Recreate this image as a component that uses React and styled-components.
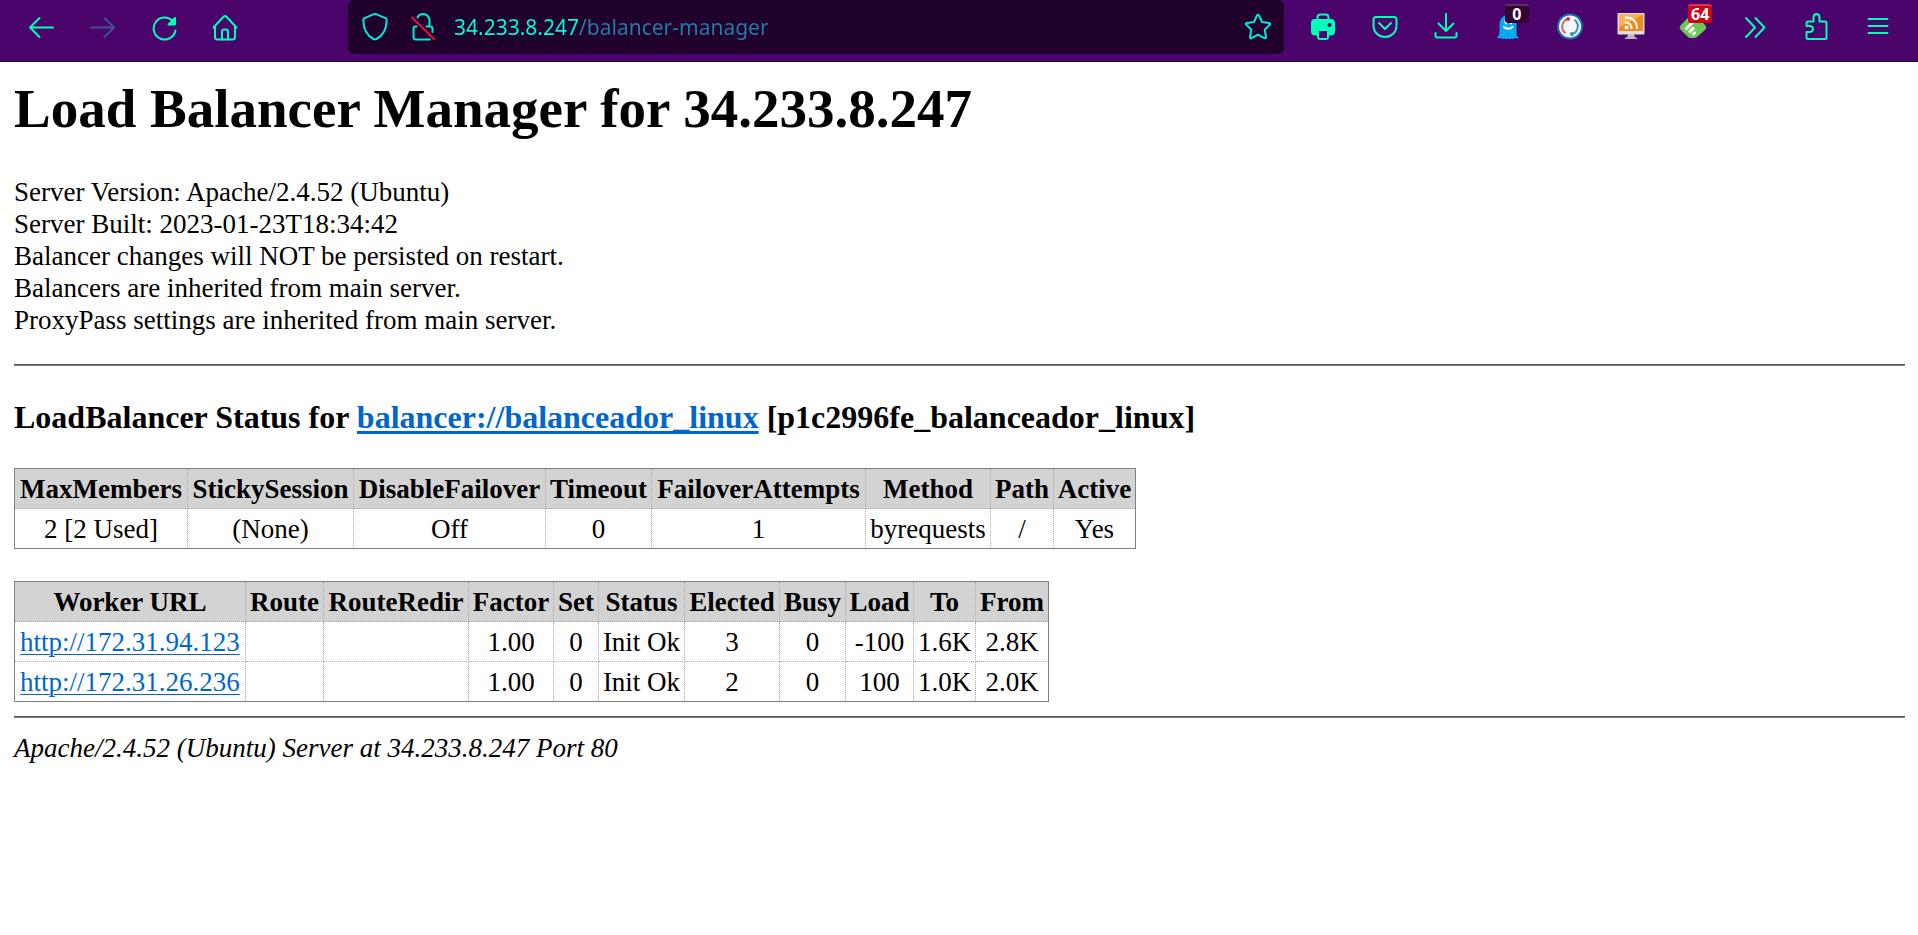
import React from 'react';
import styled, { createGlobalStyle } from 'styled-components';

const GlobalStyle = createGlobalStyle`
  *, *::before, *::after { box-sizing: border-box; }
  body { margin: 0; background: #fff; color: #000; font-family: "Liberation Serif", "Times New Roman", serif; font-size: 27px; line-height: 32px; }
`;

/* ---------- browser toolbar ---------- */

const Toolbar = styled.header`
  display: flex;
  align-items: flex-start;
  height: 62px;
  padding: 0 9px 0 10px;
  background: #4b046b;
  border-bottom: 1px solid #22062f;
`;

const ButtonGroup = styled.div`
  display: grid;
  grid-template-columns: repeat(${(p) => p.$count}, 1fr);
  flex: 0 0 ${(p) => p.$width};
  height: 54px;
`;

const ToolButton = styled.button`
  position: relative;
  display: flex;
  align-items: center;
  justify-content: center;
  padding: 0;
  border: 0;
  background: none;
  color: #00ffb7;
  cursor: pointer;

  &:disabled { color: #40558b; cursor: default; }
`;

const AddressBar = styled.form`
  display: flex;
  align-items: center;
  flex: 1 1 auto;
  height: 54px;
  margin: 0 8px 0 92px;
  padding: 0 10px 0 11px;
  border-radius: 6px;
  background: #20012c;
`;

const AddressButton = styled(ToolButton)`
  flex: 0 0 32px;
  height: 54px;
  margin-right: ${(p) => p.$after || '0'};
  color: #00ead9;
`;

const AddressInput = styled.input`
  flex: 1 1 auto;
  min-width: 0;
  height: 40px;
  padding: 0;
  border: 0;
  outline: 0;
  font: 21px/32px "Noto Sans", sans-serif;
  color: transparent;
  background: linear-gradient(90deg, #00ffdc 0 125px, #267aa5 125px);
  background-clip: text;
  -webkit-background-clip: text;
`;

const Badge = styled.span`
  position: absolute;
  top: 4px;
  left: calc(50% - ${(p) => p.$shift});
  min-width: 24px;
  height: 19px;
  padding: 0 3px;
  border-radius: 3px;
  border-top: 2px solid ${(p) => p.$edge};
  background: ${(p) => p.$color};
  color: #fff;
  font: bold 16px/17px "Open Sans", sans-serif;
  text-align: center;
`;

const IconSvg = styled.svg.attrs({ viewBox: '0 0 32 32', width: 32, height: 32, 'aria-hidden': true })`
  display: block;
  fill: none;
  stroke: currentColor;
  stroke-width: 2;
  stroke-linecap: round;
  stroke-linejoin: round;
`;

const BackIcon = () => (
  <IconSvg><path d="M28 16.5H5M14.5 7L5 16.5L14.5 26" /></IconSvg>
);
const ForwardIcon = () => (
  <IconSvg><path d="M5 16.5h23M18.500 7L28 16.500L18.500 26" /></IconSvg>
);
const ReloadIcon = () => (
  <IconSvg>
    <path d="M27.500 19.500A11 11 0 1 1 24.500 9.800" />
    <path d="M27 7v6.500h-6.500z" fill="currentColor" />
  </IconSvg>
);
const HomeIcon = () => (
  <IconSvg>
    <path d="M4.500 16.500L14.500 5.800q1.500-1.300 3 0L27.500 16.500" />
    <path d="M6 15.500V26q0 2.500 2.500 2.500h15Q26 28.500 26 26V15.500" />
    <path d="M13 28.500V20.500q0-2 2-2h2q2 0 2 2v8" />
  </IconSvg>
);
const ShieldIcon = () => (
  <IconSvg>
    <path d="M15 3.200q1-.6 2 0L26.500 7.200q1.200.6 1.200 1.800C27.500 18 24.500 24.500 17.500 28q-1.500.7-3 0C7.500 24.500 4.500 18 4.300 9q0-1.200 1.200-1.800z" />
  </IconSvg>
);
const InsecureIcon = () => (
  <IconSvg>
    <path d="M10.500 6.500C11.500 4.300 13.500 3 16 3c4 0 6.500 3 6.500 6.500V15M19.500 15.500h4q2 0 2 2V21M9.500 15.500H8.500q-2 0-2 2V26q0 2.500 2.500 2.500H23" />
    <path d="M5 6.500L27 28" stroke="#e8123f" />
  </IconSvg>
);
const StarIcon = () => (
  <IconSvg>
    <path d="M15 4.500q1-1.700 2 0l3 6.500 7 .9q2 .4.700 1.900l-5 5 1.300 7q.1 2-1.700 1.300L16 23.700l-6.300 3.400q-1.800.700-1.700-1.300l1.300-7-5-5q-1.300-1.500.7-1.900l7-.9z" />
  </IconSvg>
);
const PrinterIcon = () => (
  <IconSvg>
    <path d="M10.500 9V6.500q0-3 3-3h5q3 0 3 3V9" />
    <path d="M8 9h16q3 0 3 3v8.500q0 3-3 3H8q-3 0-3-3V12q0-3 3-3z" fill="currentColor" />
    <path d="M11 19h10v7q0 2-2 2h-6q-2 0-2-2z" fill="#4b046b" />
    <circle cx="22.500" cy="14" r="2" fill="#4b046b" stroke="none" />
  </IconSvg>
);
const PocketIcon = () => (
  <IconSvg>
    <path d="M7 6h18q2.500 0 2.500 2.500V15a11.500 11 0 0 1-23 0V8.500Q4.500 6 7 6z" />
    <path d="M10 12l6 6 6-6" />
  </IconSvg>
);
const DownloadIcon = () => (
  <IconSvg><path d="M16 3v17M8.500 12.500L16 20l7.500-7.500M5.500 22v2.500q0 2 2 2h17q2 0 2-2V22" /></IconSvg>
);
const GhostIcon = () => (
  <IconSvg>
    <path d="M7.500 12.500a8.500 8.500 0 0 1 17 0v9.500q.5 4 2.500 4.500-2 1.500-4 .5-2 2-3.500.5-1.500 1.500-3.500 0-2 1.500-3.500 0-2 1.500-3.500-.5-2 1-4-.5 2-1.500 2.500-4.500z" fill="#05a9f0" stroke="none" />
    <path d="M12 16q4 3.500 8.500 0" stroke="#fff" />
    <ellipse cx="14" cy="10.500" rx="1.500" ry="3" fill="#fff" stroke="none" />
    <ellipse cx="19" cy="10.500" rx="1.500" ry="3" fill="#fff" stroke="none" />
  </IconSvg>
);
const SyncIcon = () => (
  <IconSvg>
    <circle cx="16" cy="15.500" r="13" fill="#176fae" stroke="none" />
    <circle cx="16" cy="15.500" r="11" fill="#f5f7fa" stroke="none" />
    <path d="M15 7.700a8 8 0 0 0-4 14" stroke="#dd6557" />
    <path d="M17 23.300a8 8 0 0 0 4-14" stroke="#3492bd" />
    <circle cx="14" cy="8" r="2" fill="#c0443c" stroke="none" />
    <circle cx="18" cy="23" r="2" fill="#3492bd" stroke="none" />
  </IconSvg>
);
const FeedMonitorIcon = () => (
  <IconSvg>
    <path d="M13 23h6l1 3.500h2v1.500H10v-1.500h2z" fill="#b9b9b9" stroke="none" />
    <rect x="2.500" y="2" width="27" height="21.500" rx="1" fill="#dedede" stroke="none" />
    <rect x="4" y="3.500" width="24" height="16.500" fill="#f28a1c" stroke="none" />
    <path d="M4 3.500h24L4 16z" fill="#f8b35c" stroke="none" />
    <path d="M10 6.500q12 0 12 11.500M10 11.500q6.500 0 6.500 6.500" stroke="#fff" strokeLinecap="butt" />
    <circle cx="11.500" cy="16.500" r="2" fill="#fff" stroke="none" />
  </IconSvg>
);

const FeedlyStripes = styled.path`
  stroke: #fff;
  stroke-width: 3px;
  stroke-linecap: butt;
`;

const FeedlyIcon = () => (
  <IconSvg>
    <path d="M13.500 4q2.500-2 5 0l10 10.500q1.500 2 0 4L20 26q-1 1-2.500 1h-4Q12 27 11 26l-7.500-7.500q-1.500-2 0-4z" fill="#6cc655" stroke="none" />
    <FeedlyStripes d="M8.500 18.500l8-8M12 21.500l5-5M15.500 24l3-3" />
  </IconSvg>
);
const OverflowIcon = () => (
  <IconSvg><path d="M7 7l9 9.500L7 26M16.500 7l9 9.500L16.500 26" /></IconSvg>
);
const PuzzleIcon = () => (
  <IconSvg>
    <path d="M8 10.500h5.500V6.500q0-3.500 3-3.500t3 3.500v4H25q1.500 0 1.500 1.500v14.500q0 1.500-1.500 1.500H8q-1.500 0-1.500-1.500V21H9.500q3.500 0 3.500-3t-3.500-3h-3V12q0-1.500 1.500-1.500z" />
  </IconSvg>
);
const MenuIcon = () => (
  <IconSvg><path d="M6.500 8h19M6.500 15h19M6.500 22h19" /></IconSvg>
);

const navigation = [
  { label: 'Back', Icon: BackIcon },
  { label: 'Forward', Icon: ForwardIcon, disabled: true },
  { label: 'Reload', Icon: ReloadIcon },
  { label: 'Home', Icon: HomeIcon },
];

const extensions = [
  { label: 'Print', Icon: PrinterIcon },
  { label: 'Save to Pocket', Icon: PocketIcon },
  { label: 'Downloads', Icon: DownloadIcon },
  { label: 'Tracker blocker', Icon: GhostIcon, badge: { text: '0', color: '#330334', edge: '#5d3062', shift: '3px' } },
  { label: 'Sync', Icon: SyncIcon },
  { label: 'Feed reader', Icon: FeedMonitorIcon },
  { label: 'Feedly', Icon: FeedlyIcon, badge: { text: '64', color: '#cf0016', edge: '#d93a4a', shift: '5px' } },
  { label: 'More tools', Icon: OverflowIcon },
  { label: 'Extensions', Icon: PuzzleIcon },
  { label: 'Menu', Icon: MenuIcon },
];

const ToolButtons = ({ items, width }) => (
  <ButtonGroup $count={items.length} $width={width}>
    {items.map(({ label, Icon, disabled, badge }) => (
      <ToolButton key={label} type="button" aria-label={label} disabled={disabled}>
        <Icon />
        {badge && (
          <Badge $color={badge.color} $edge={badge.edge} $shift={badge.shift}>{badge.text}</Badge>
        )}
      </ToolButton>
    ))}
  </ButtonGroup>
);

/* ---------- balancer manager page ---------- */

const Page = styled.main`
  padding: 16px 13px 0 14px;
`;

const Title = styled.h1`
  margin: 0 0 36px;
  font-size: 55px;
  line-height: 62px;
`;

const InfoLine = styled.p`
  margin: 0;
`;

const Rule = styled.hr`
  height: 2px;
  margin: ${(p) => p.$space};
  border: 0;
  border-top: 1px solid #555;
  background: #808080;
`;

const Subtitle = styled.h3`
  margin: 0 0 32px;
  font-size: 32px;
  line-height: 38px;
`;

const Link = styled.a`
  color: #06c;
  text-decoration: underline;
  text-decoration-thickness: ${(p) => (p.$heavy ? '3px' : '1px')};
  text-underline-offset: 3px;
`;

const DataTable = styled.table`
  margin-bottom: ${(p) => p.$after || '0'};
  border: 1px solid #808080;
  border-collapse: collapse;
  background: #fff;
  text-align: center;

  th, td {
    height: 40px;
    padding: 3px;
    border: 1px dotted #aaa;
    white-space: nowrap;
  }
  th { background: lightgray; }
  tr > :first-child { border-left: 1px solid #808080; }
  tr > :last-child { border-right: 1px solid #808080; }
  thead th { border-top: 1px solid #808080; }
  tbody tr:last-child td { border-bottom: 1px solid #808080; }
`;

const HeadCell = styled.th`
  min-width: ${(p) => p.$width}px;
`;

const Footer = styled.address`
  font-style: italic;
`;

const serverInfo = [
  'Server Version: Apache/2.4.52 (Ubuntu)',
  'Server Built: 2023-01-23T18:34:42',
  'Balancer changes will NOT be persisted on restart.',
  'Balancers are inherited from main server.',
  'ProxyPass settings are inherited from main server.',
];

const balancerColumns = [
  ['MaxMembers', 173], ['StickySession', 166], ['DisableFailover', 192], ['Timeout', 106],
  ['FailoverAttempts', 214], ['Method', 125], ['Path', 63], ['Active', 82],
];
const balancerRows = [['2 [2 Used]', '(None)', 'Off', '0', '1', 'byrequests', '/', 'Yes']];

const workerColumns = [
  ['Worker URL', 231], ['Route', 78], ['RouteRedir', 145], ['Factor', 85], ['Set', 45], ['Status', 86],
  ['Elected', 95], ['Busy', 66], ['Load', 68], ['To', 62], ['From', 73],
];
const workerRows = [
  ['http://172.31.94.123', '', '', '1.00', '0', 'Init Ok', '3', '0', '-100', '1.6K', '2.8K'],
  ['http://172.31.26.236', '', '', '1.00', '0', 'Init Ok', '2', '0', '100', '1.0K', '2.0K'],
];

const StatusTable = ({ columns, rows, after }) => (
  <DataTable $after={after}>
    <thead>
      <tr>
        {columns.map(([name, width]) => (
          <HeadCell key={name} scope="col" $width={width}>{name}</HeadCell>
        ))}
      </tr>
    </thead>
    <tbody>
      {rows.map((row) => (
        <tr key={row[0]}>
          {row.map((cell, i) => (
            <td key={columns[i][0]}>{cell.startsWith('http') ? <Link href="#worker">{cell}</Link> : cell}</td>
          ))}
        </tr>
      ))}
    </tbody>
  </DataTable>
);

export default function App() {
  return (
    <>
      <GlobalStyle />
      <Toolbar>
        <ToolButtons items={navigation} width="246px" />
        <AddressBar onSubmit={(e) => e.preventDefault()}>
          <AddressButton type="button" aria-label="Tracking protection" $after="16px"><ShieldIcon /></AddressButton>
          <AddressButton type="button" aria-label="Connection is not secure" $after="15px"><InsecureIcon /></AddressButton>
          <AddressInput aria-label="Address" defaultValue="34.233.8.247/balancer-manager" spellCheck={false} />
          <AddressButton type="button" aria-label="Bookmark this page"><StarIcon /></AddressButton>
        </AddressBar>
        <ToolButtons items={extensions} width="617px" />
      </Toolbar>
      <Page>
        <Title>Load Balancer Manager for 34.233.8.247</Title>
        {serverInfo.map((line) => <InfoLine key={line}>{line}</InfoLine>)}
        <Rule $space="28px 0 32px" />
        <Subtitle>
          LoadBalancer Status for <Link href="#balancer" $heavy>balancer://balanceador_linux</Link> [p1c2996fe_balanceador_linux]
        </Subtitle>
        <StatusTable columns={balancerColumns} rows={balancerRows} after="32px" />
        <StatusTable columns={workerColumns} rows={workerRows} />
        <Rule $space="14px 0" />
        <Footer>Apache/2.4.52 (Ubuntu) Server at 34.233.8.247 Port 80</Footer>
      </Page>
    </>
  );
}
